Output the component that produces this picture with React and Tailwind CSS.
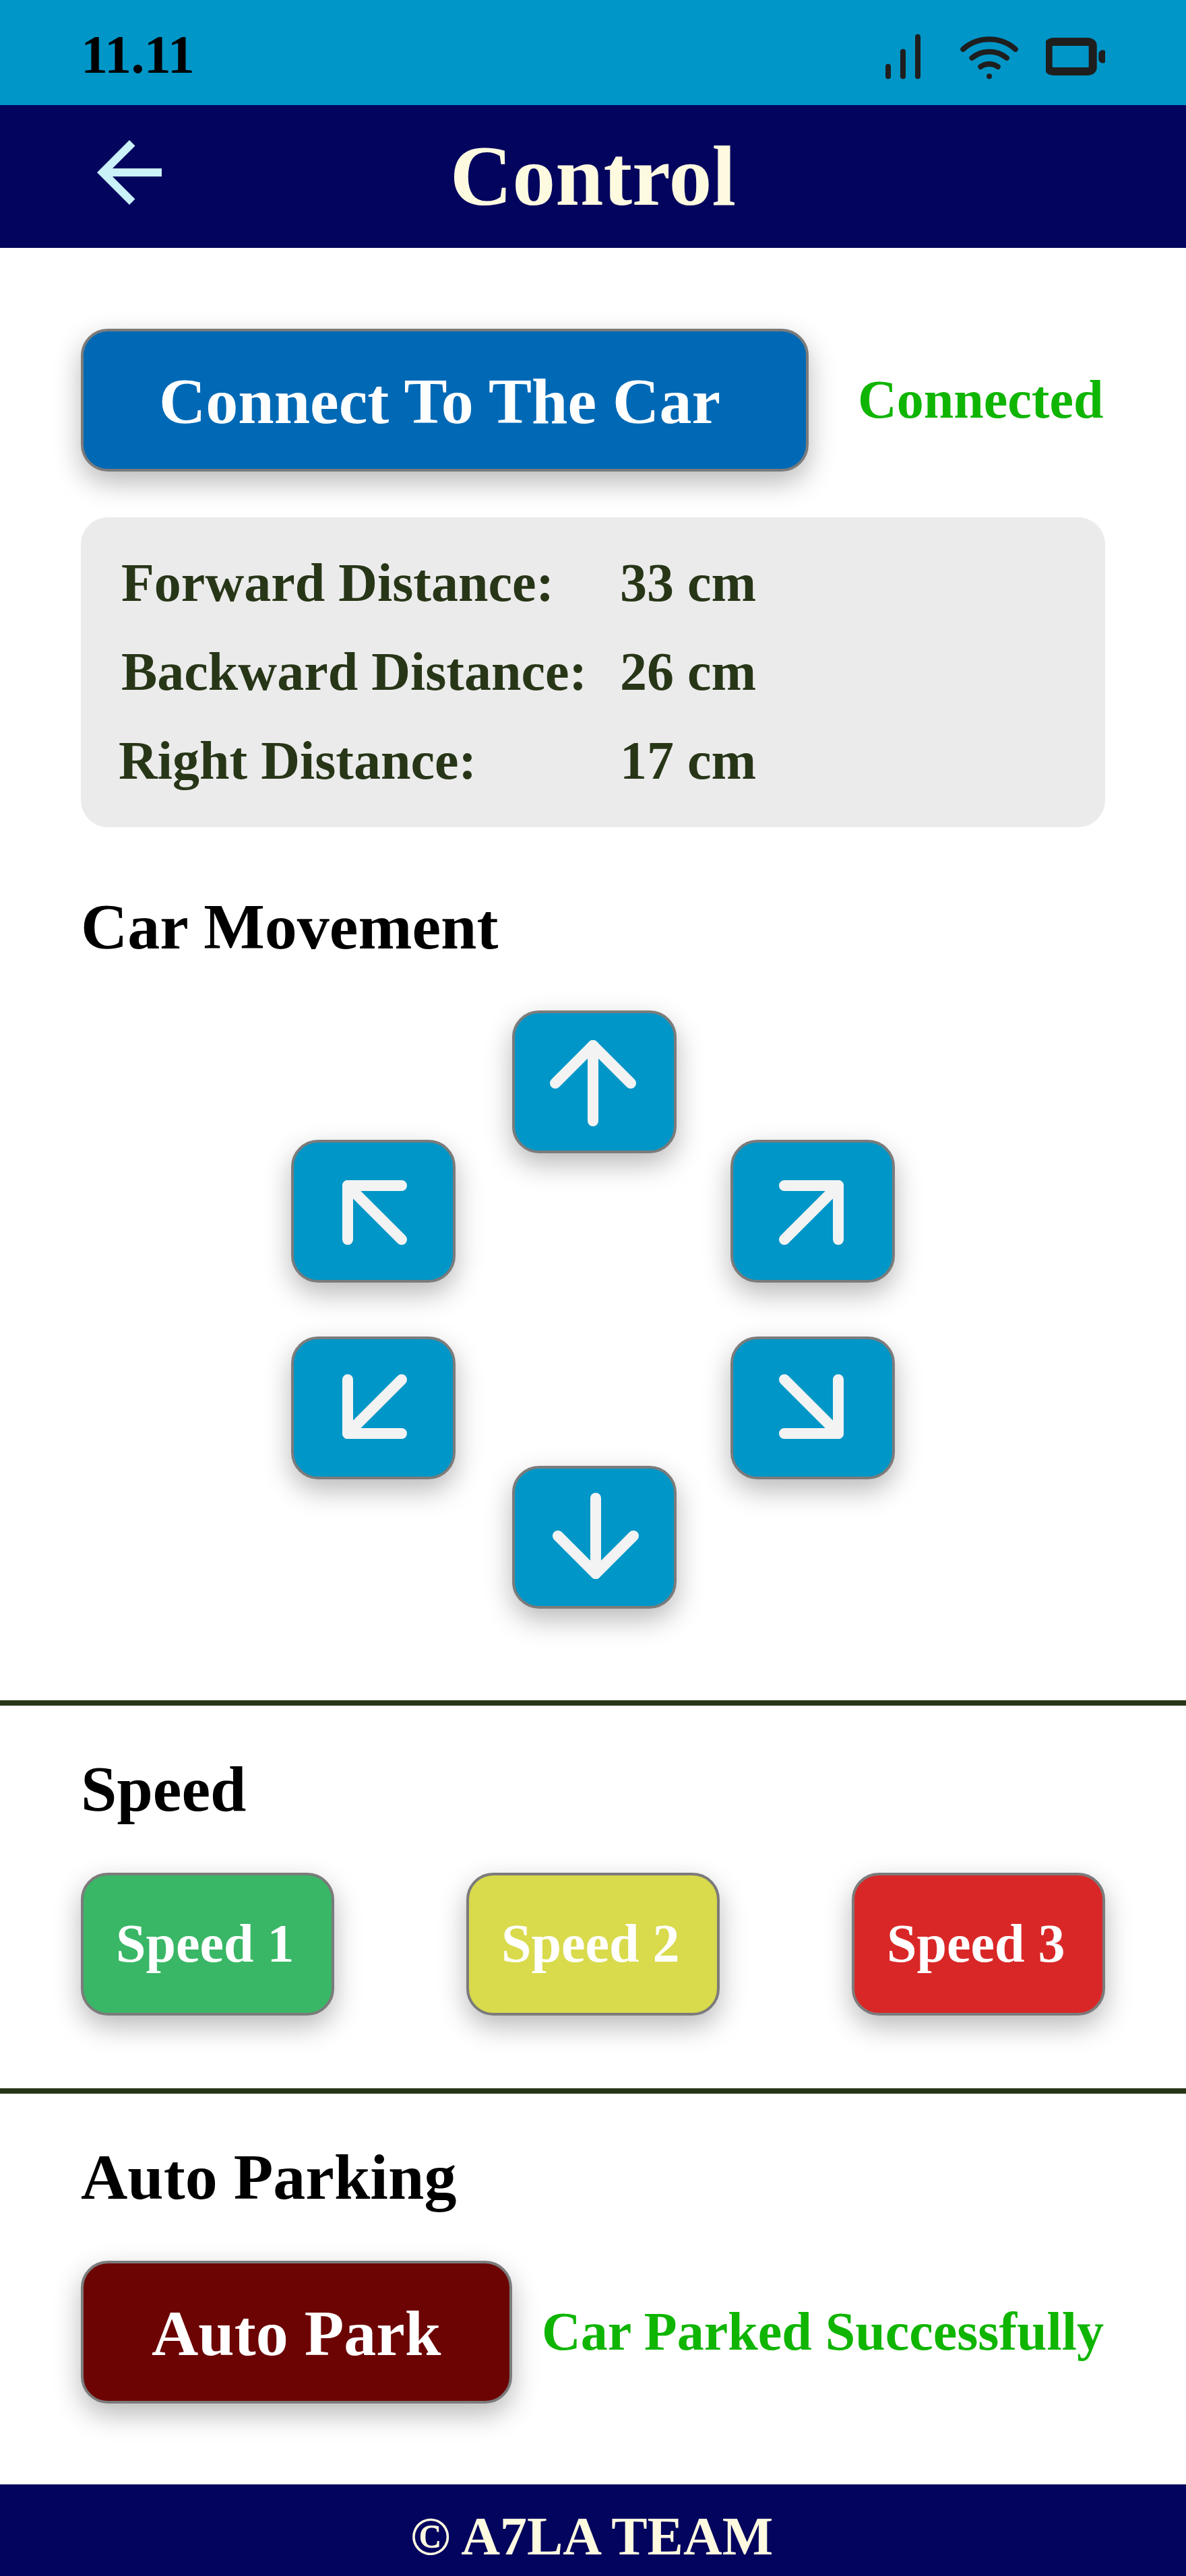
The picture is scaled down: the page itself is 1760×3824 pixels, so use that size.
import { ArrowDown, ArrowDownLeft, ArrowDownRight, ArrowUp, ArrowUpLeft, ArrowUpRight } from "lucide-react";

const raised =
  "box-border rounded-[40px] border-4 border-[#7b7b7b] shadow-[0_16px_40px_rgba(0,0,0,0.28)]";

const distances = [
  { label: "Forward Distance:", value: "33 cm", pad: "pl-[60px]" },
  { label: "Backward Distance:", value: "26 cm", pad: "pl-[60px]" },
  { label: "Right Distance:", value: "17 cm", pad: "pl-[56px]" },
];

const speeds = [
  { label: "Speed 1", color: "bg-[#39b766]" },
  { label: "Speed 2", color: "bg-[#d9da4c]" },
  { label: "Speed 3", color: "bg-[#d92727]" },
];

function SignalIcon() {
  return (
    <svg width="88" height="88" viewBox="0 0 24 24" fill="none" stroke="#1e1e1e" strokeWidth="2.1818" strokeLinecap="round">
      <path d="M6 20v-4M12 20V10M18 20V4" />
    </svg>
  );
}

function WifiIcon() {
  return (
    <svg width="88" height="88" viewBox="0 0 24 24" fill="none" stroke="#1e1e1e" strokeWidth="2.1818" strokeLinecap="round" strokeLinejoin="round">
      <path d="M1.42 9a16 16 0 0 1 21.16 0" />
      <path d="M5 12.55a11 11 0 0 1 14.08 0" />
      <path d="M8.53 16.11a6 6 0 0 1 6.95 0" />
      <path d="M12 20h.01" />
    </svg>
  );
}

function BatteryIcon() {
  return (
    <svg className="overflow-hidden" width="88" height="88" viewBox="0 0 24 24" fill="none" stroke="#1e1e1e" strokeWidth="3.2727" strokeLinecap="round" strokeLinejoin="round">
      <path d="M17 6H3C1.895 6 1 6.672 1 7.5v9c0 .828.895 1.5 2 1.5h14c1.105 0 2-.672 2-1.5v-9C19 6.672 18.105 6 17 6z" />
      <path d="M23 13v-2" />
    </svg>
  );
}

function BackIcon() {
  return (
    <svg width="144" height="144" viewBox="0 0 24 24" fill="#caf0f8">
      <path d="M20 11H7.83l5.59-5.59L12 4l-8 8 8 8 1.41-1.41L7.83 13H20v-2z" />
    </svg>
  );
}

function PadButton({ icon: Icon, label, nudge }) {
  return (
    <button aria-label={label} className={`${raised} flex h-[212px] w-[244px] items-center justify-center bg-[#0096c7]`}>
      <Icon className={`shrink-0 ${nudge}`} size={192} color="#f3f3f3" strokeWidth={2} />
    </button>
  );
}

export default function App() {
  return (
    <div className="flex h-[3824px] w-[1760px] flex-col overflow-hidden bg-white font-['Liberation_Serif',serif] font-bold whitespace-nowrap">
      <div className="flex h-[156px] shrink-0 items-start justify-between bg-[#0096c7] px-[120px] pt-10">
        <span className="mt-px text-[80px] leading-[80px] tracking-[-0.6px] text-black">11.11</span>
        <div className="flex gap-10">
          <SignalIcon />
          <WifiIcon />
          <BatteryIcon />
        </div>
      </div>

      <header className="grid h-[212px] shrink-0 grid-cols-[144px_1fr_144px] items-start bg-[#03045e] px-[120px] pt-7">
        <BackIcon />
        <h1 className="mt-[13px] text-center text-[128px] leading-[128px] text-[#fefae0]">Control</h1>
      </header>

      <main className="flex flex-1 flex-col">
        <section className="px-[120px] pt-[120px]">
          <div className="flex items-start">
            <button className={`${raised} h-[212px] w-[1080px] bg-[#0069b5] pl-[112px] text-left text-[96px] leading-[96px] text-white`}>
              <span className="block pt-1">Connect To The Car</span>
            </button>
            <span className="mt-[65px] ml-[73px] text-[80px] leading-[80px] text-[#0fb500]">Connected</span>
          </div>

          <div className="mt-[68px] flex h-[460px] flex-col gap-[52px] rounded-[40px] bg-[#ebebeb] pt-[57px] text-[80px] leading-[80px] text-[#283618]">
            {distances.map((d) => (
              <div key={d.label} className="flex">
                <span className={`w-[800px] ${d.pad}`}>{d.label}</span>
                <span>{d.value}</span>
              </div>
            ))}
          </div>

          <h2 className="mt-[100px] text-[96px] leading-[96px] text-black">Car Movement</h2>

          <div className="mt-[76px] flex h-[888px] pl-[312px]">
            <div className="mt-[192px] flex flex-col gap-20">
              <PadButton icon={ArrowUpLeft} label="Forward left" nudge="translate-x-[2px] translate-y-[2px]" />
              <PadButton icon={ArrowDownLeft} label="Backward left" nudge="translate-x-[2px] -translate-y-[2px]" />
            </div>
            <div className="ml-[84px] flex flex-col justify-between">
              <PadButton icon={ArrowUp} label="Forward" nudge="-translate-x-[2px] translate-y-[2px]" />
              <PadButton icon={ArrowDown} label="Backward" nudge="translate-x-[2px] -translate-y-[2px]" />
            </div>
            <div className="mt-[192px] ml-20 flex flex-col gap-20">
              <PadButton icon={ArrowUpRight} label="Forward right" nudge="-translate-x-[2px] translate-y-[2px]" />
              <PadButton icon={ArrowDownRight} label="Backward right" nudge="-translate-x-[2px] -translate-y-[2px]" />
            </div>
          </div>
        </section>

        <section className="mt-[136px] border-t-8 border-[#283618] px-[120px] pt-[76px]">
          <h2 className="text-[96px] leading-[96px] text-black">Speed</h2>
          <div className="mt-[76px] flex justify-between">
            {speeds.map((s) => (
              <button key={s.label} className={`${raised} h-[212px] w-[376px] pl-12 text-left text-[80px] leading-[80px] text-white ${s.color}`}>
                <span className="block pb-[2px]">{s.label}</span>
              </button>
            ))}
          </div>
        </section>

        <section className="mt-[108px] border-t-8 border-[#283618] px-[120px] pt-[76px]">
          <h2 className="text-[96px] leading-[96px] text-black">Auto Parking</h2>
          <div className="mt-[76px] flex items-start">
            <button className={`${raised} h-[212px] w-[640px] bg-[#6d0404] pl-[101px] text-left text-[96px] leading-[96px] text-white`}>
              <span className="block pt-1">Auto Park</span>
            </button>
            <span className="mt-[65px] ml-[44px] text-[80px] leading-[80px] text-[#0fb500]">Car Parked Successfully</span>
          </div>
        </section>
      </main>

      <footer className="h-[136px] shrink-0 bg-[#03045e] pt-[37px] text-center text-[80px] leading-[80px] text-[#fefae0]">
        <span className="mr-1">© A7LA TEAM</span>
      </footer>
    </div>
  );
}
